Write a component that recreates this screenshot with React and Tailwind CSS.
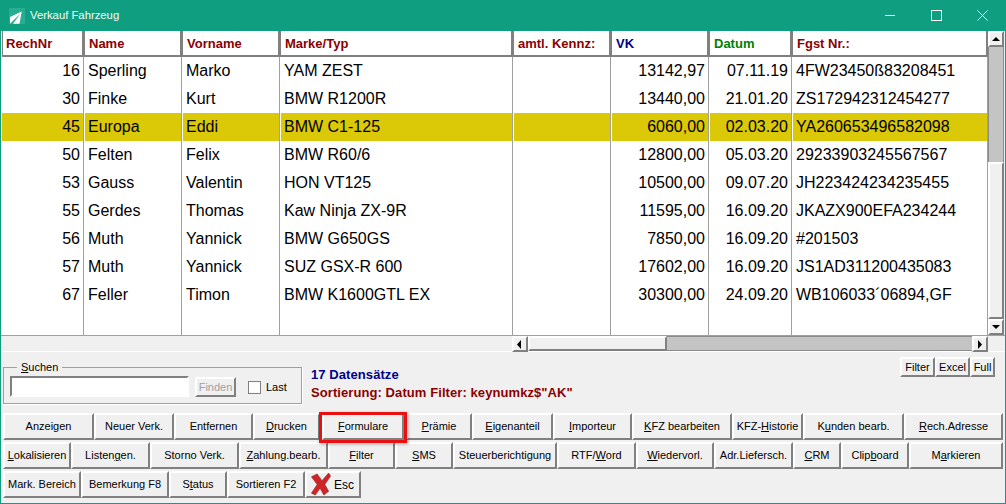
const cols = [
  { w: "w-[82px]", title: "RechNr", color: "text-[#8b0000]" },
  { w: "w-[98px]", title: "Name", color: "text-[#8b0000]" },
  { w: "w-[98px]", title: "Vorname", color: "text-[#8b0000]" },
  { w: "w-[233px]", title: "Marke/Typ", color: "text-[#8b0000]" },
  { w: "w-[98px]", title: "amtl. Kennz:", color: "text-[#8b0000]" },
  { w: "w-[98px]", title: "VK", color: "text-[#00008b]" },
  { w: "w-[83px]", title: "Datum", color: "text-[#008000]" },
  { w: "w-[196px]", title: "Fgst Nr.:", color: "text-[#8b0000]" },
];

const rows = [
  ["16", "Sperling", "Marko", "YAM ZEST", "", "13142,97", "07.11.19", "4FW23450ß83208451"],
  ["30", "Finke", "Kurt", "BMW R1200R", "", "13440,00", "21.01.20", "ZS172942312454277"],
  ["45", "Europa", "Eddi", "BMW C1-125", "", "6060,00", "02.03.20", "YA260653496582098"],
  ["50", "Felten", "Felix", "BMW R60/6", "", "12800,00", "05.03.20", "29233903245567567"],
  ["53", "Gauss", "Valentin", "HON VT125", "", "10500,00", "09.07.20", "JH223424234235455"],
  ["55", "Gerdes", "Thomas", "Kaw Ninja ZX-9R", "", "11595,00", "16.09.20", "JKAZX900EFA234244"],
  ["56", "Muth", "Yannick", "BMW G650GS", "", "7850,00", "16.09.20", "#201503"],
  ["57", "Muth", "Yannick", "SUZ GSX-R 600", "", "17602,00", "16.09.20", "JS1AD311200435083"],
  ["67", "Feller", "Timon", "BMW K1600GTL EX", "", "30300,00", "24.09.20", "WB106033´06894,GF"],
];

const rightAligned = [0, 5, 6];

const row1 = [
  ["w-[91px]", "Anzeigen"],
  ["w-[80px]", "Neuer Verk."],
  ["w-[79px]", "Entfernen"],
  ["w-[67px]", <><u>D</u>rucken</>],
  ["w-[86px]", <><u>F</u>ormulare</>, true],
  ["w-[66px]", <><u>P</u>rämie</>],
  ["w-[81px]", <><u>E</u>igenanteil</>],
  ["w-[79px]", <><u>I</u>mporteur</>],
  ["w-[100px]", <><u>K</u>FZ bearbeiten</>],
  ["w-[71px]", <>KFZ-<u>H</u>istorie</>],
  ["w-[101px]", <>K<u>u</u>nden bearb.</>],
  ["w-[99px]", <><u>R</u>ech.Adresse</>],
];

const row2 = [
  ["w-[68px]", <><u>L</u>okalisieren</>],
  ["w-[79px]", <>Listen<u>g</u>en.</>],
  ["w-[89px]", "Storno Verk."],
  ["w-[89px]", <><u>Z</u>ahlung.bearb.</>],
  ["w-[67px]", <><u>F</u>ilter</>],
  ["w-[58px]", <><u>S</u>MS</>],
  ["w-[104px]", "Steuerberichtigung"],
  ["w-[79px]", <>RTF/<u>W</u>ord</>],
  ["w-[78px]", <><u>W</u>iedervorl.</>],
  ["w-[79px]", "Adr.Liefersch."],
  ["w-[48px]", <><u>C</u>RM</>],
  ["w-[68px]", <>Clip<u>b</u>oard</>],
  ["w-[94px]", <>M<u>a</u>rkieren</>],
];

const row3 = [
  ["w-[78px]", "Mark. Bereich"],
  ["w-[88px]", "Bemerkung F8"],
  ["w-[58px]", <>S<u>t</u>atus</>],
  ["w-[78px]", "Sortieren F2"],
];

const bevel =
  "border-t-2 border-l-2 border-b-2 border-r-2 border-t-white border-l-white border-b-[#808080] border-r-[#808080]";

function Btn({ w, children, active }) {
  const button = (
    <button
      className={`${active ? "w-full" : w} h-[27px] shrink-0 flex items-center justify-center whitespace-nowrap text-[11px] text-black bg-[#f0f0f0] ${bevel}`}
    >
      <span>{children}</span>
    </button>
  );
  if (!active) return button;
  // the red frame around Formulare
  return (
    <div className={`${w} shrink-0 relative px-[2px]`}>
      {button}
      <div className="absolute left-[-1px] right-[-1px] top-[-1px] bottom-[-3px] border-[3px] border-[#e81010] shadow-[1px_1px_3px_rgba(0,0,0,0.35)]" />
    </div>
  );
}

function SmallBtn({ w, children }) {
  return (
    <button className={`${w} h-[20px] flex items-center justify-center text-[11px] text-black bg-[#f0f0f0] ${bevel}`}>
      {children}
    </button>
  );
}

function Arrow({ dir }) {
  const points = {
    up: "1,6 9,6 5,2",
    down: "1,2 9,2 5,6",
    left: "6,0 6,9 2,4.5",
    right: "3,0 3,9 7,4.5",
  };
  return (
    <svg width="10" height="9" viewBox="0 0 10 9">
      <polygon points={points[dir]} fill="#000" />
    </svg>
  );
}

function ScrollBtn({ dir, className = "" }) {
  return (
    <div className={`w-[16px] h-[16px] shrink-0 flex items-center justify-center bg-[#f0f0f0] ${bevel} ${className}`}>
      <Arrow dir={dir} />
    </div>
  );
}

export default function App() {
  return (
    <div
      className="w-[1006px] h-[504px] overflow-hidden flex flex-col bg-[#f0f0f0] border-x border-b border-[#0f9f80]"
      style={{ fontFamily: '"Liberation Sans", Arial, sans-serif' }}
    >
      {/* title bar */}
      <div className="h-[31px] shrink-0 bg-[#0f9f80] flex items-center text-white -mx-px">
        <svg width="16" height="16" viewBox="0 0 16 16" className="ml-[9px]">
          <rect width="16" height="16" fill="#27ad91" />
          <path d="M1 9 L12.7 3.5 L10.5 15.7 L4 15.7 L11.5 5.5 L1 15.7 Z" fill="#fff" />
        </svg>
        <span className="ml-[5px] text-[11.3px] text-[#f2fbf8]">Verkauf Fahrzeug</span>
        <div className="ml-auto mr-px flex items-center">
          <div className="w-[46px] h-[31px] flex items-center justify-center">
            <div className="w-[10px] h-px bg-white" />
          </div>
          <div className="w-[46px] h-[31px] flex items-center justify-center">
            <div className="w-[11px] h-[11px] border border-white" />
          </div>
          <div className="w-[46px] h-[31px] flex items-center justify-center">
            <svg width="11" height="11" viewBox="0 0 11 11">
              <path d="M0.5 0.5 L10.5 10.5 M10.5 0.5 L0.5 10.5" stroke="#fff" strokeWidth="1" fill="none" />
            </svg>
          </div>
        </div>
      </div>

      {/* grid + scrollbars */}
      <div className="flex h-[304px] shrink-0 bg-white pl-px">
        <div className="w-[986px] shrink-0 overflow-hidden">
          <div className="flex h-[26px] border-b-2 border-[#808080]">
            {cols.map((c) => (
              <div
                key={c.title}
                className={`${c.w} shrink-0 flex items-center pl-[4px] first:pl-[3px] pr-[2px] pt-[2px] text-[13px] font-bold bg-white border-l border-l-[#808080] border-r-2 border-r-[#808080] ${c.color}`}
              >
                {c.title}
              </div>
            ))}
          </div>
          {rows.map((r) => {
            const selected = r[0] === "45";
            return (
              <div key={r[0]} className="flex h-[28px]">
                {r.map((val, i) => (
                  <div
                    key={i}
                    className={`${cols[i].w} shrink-0 flex items-center px-[3px] text-[16px] leading-none text-black whitespace-nowrap border-l first:border-l-0 border-l-white border-r border-r-[#a0a0a0] ${
                      rightAligned.includes(i) ? "justify-end" : ""
                    } ${selected ? "bg-[#dbc807]" : ""}`}
                  >
                    {val}
                  </div>
                ))}
              </div>
            );
          })}
          <div className="flex h-[26px]">
            {cols.map((c) => (
              <div key={c.title} className={`${c.w} shrink-0 border-r border-[#a0a0a0]`} />
            ))}
          </div>
        </div>
        <div className="w-[17px] shrink-0 flex flex-col bg-[#f0f0f0]">
          <ScrollBtn dir="up" />
          <div className="w-[16px] h-[115px] bg-[#c4c4c4] border-x border-[#8a8a8a]" />
          <div className={`w-[16px] flex-1 bg-[#f0f0f0] ${bevel}`} />
          <ScrollBtn dir="down" />
        </div>
      </div>

      {/* horizontal scrollbar */}
      <div className="h-[17px] shrink-0 flex border-t border-[#a0a0a0] border-b border-b-white">
        <div className="w-[511px] shrink-0" />
        <div className="w-[476px] shrink-0 flex">
          <ScrollBtn dir="left" />
          <div className={`w-[139px] shrink-0 bg-[#f0f0f0] ${bevel}`} />
          <div className="flex-1 bg-[#c4c4c4] border-y border-[#8a8a8a]" />
          <ScrollBtn dir="right" />
        </div>
      </div>

      {/* search + status */}
      <div className="h-[61px] shrink-0 flex pl-[2px]">
        <fieldset className="w-[299px] h-[43px] mt-[9px] border border-[#a0a0a0] shadow-[1px_1px_0_#fff] px-[6px] flex items-start">
          <legend className="ml-[7px] px-[4px] text-[11px] leading-[12px] text-black">
            <u>S</u>uchen
          </legend>
          <input
            readOnly
            className="w-[179px] h-[21px] mt-[3px] bg-white border-2 border-t-[#808080] border-l-[#808080] border-r-white border-b-white outline-none"
          />
          <button className={`w-[41px] h-[20px] mt-[4px] ml-[6px] flex items-center justify-center text-[11px] text-[#a0a0a0] bg-[#f0f0f0] ${bevel}`}>
            Finden
          </button>
          <div className="w-[13px] h-[13px] mt-[8px] ml-[12px] bg-white border border-[#808080]" />
          <span className="ml-[5px] mt-[7px] text-[11px] leading-[14px] text-black">Last</span>
        </fieldset>
        <div className="ml-[9px] pt-[14px] flex-1 font-bold text-[13px] tracking-[0.08px]">
          <div className="text-[#00008b] leading-[18px]">17 Datensätze</div>
          <div className="text-[#8b0000] leading-[18px]">Sortierung: Datum Filter: keynumkz$"AK"</div>
        </div>
        <div className="flex mt-[5px] mr-[10px] h-[20px]">
          <SmallBtn w="w-[35px]">Filter</SmallBtn>
          <SmallBtn w="w-[35px]">Excel</SmallBtn>
          <SmallBtn w="w-[25px]">Full</SmallBtn>
        </div>
      </div>

      {/* button rows */}
      <div className="flex flex-col gap-[2px] pl-[2px]">
        <div className="flex">
          {row1.map(([w, label, active], i) => (
            <Btn key={i} w={w} active={active}>{label}</Btn>
          ))}
        </div>
        <div className="flex">
          {row2.map(([w, label], i) => (
            <Btn key={i} w={w}>{label}</Btn>
          ))}
        </div>
        <div className="flex">
          {row3.map(([w, label], i) => (
            <Btn key={i} w={w}>{label}</Btn>
          ))}
          <button className={`w-[56px] h-[27px] flex items-center pl-[4px] gap-[3px] text-[12px] text-black bg-[#f0f0f0] ${bevel}`}>
            <svg width="20" height="23" viewBox="0 0 20 24" className="shrink-0">
              <path
                d="M0 4 L6 1 L11 8 L18 0 L20 3 L14 12 L18 19 L13 23 L9 16 L4 23 L0 21 L6 12 Z"
                fill="#cf2428"
                stroke="#8f1a1a"
                strokeWidth="0.6"
              />
            </svg>
            Esc
          </button>
        </div>
      </div>
    </div>
  );
}
